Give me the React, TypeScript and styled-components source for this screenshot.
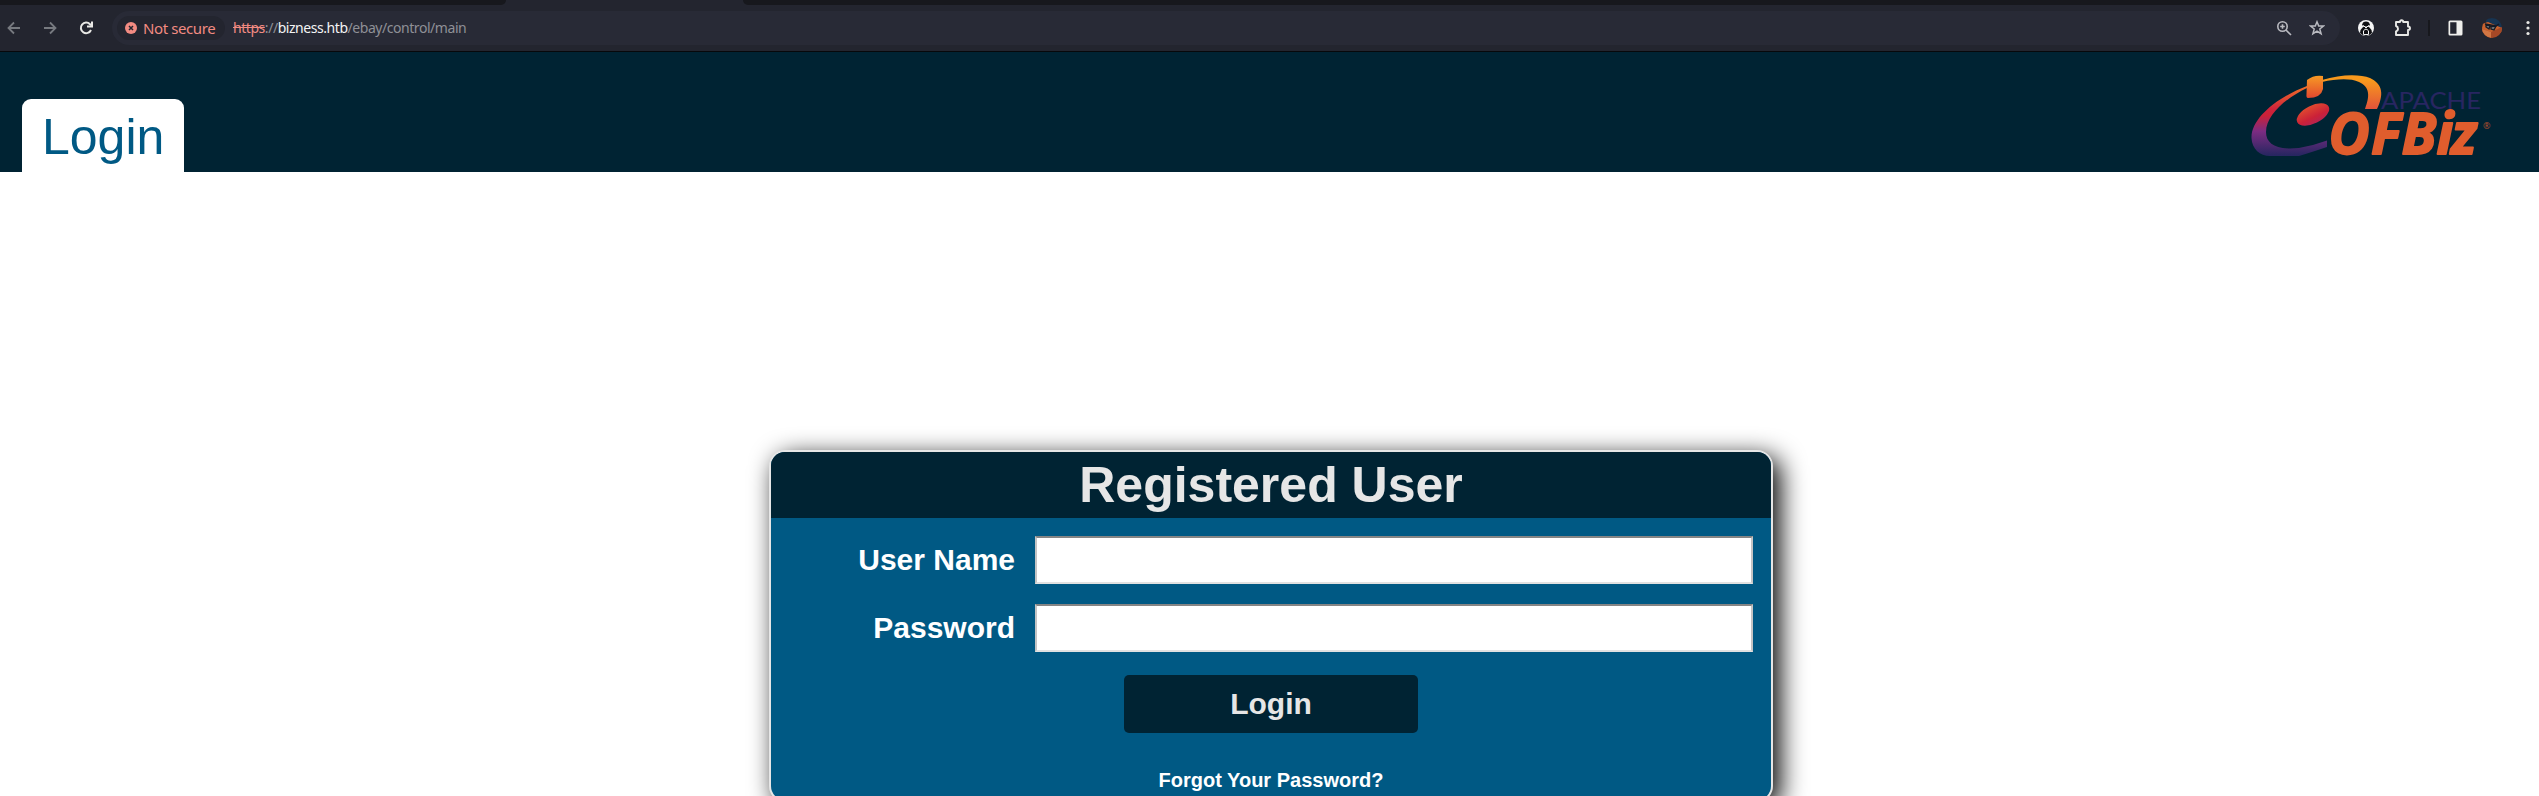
import React from 'react';
import styled, { createGlobalStyle } from 'styled-components';

const Global = createGlobalStyle`
  * { box-sizing: border-box; }
  html, body { margin: 0; background: #fff; }
  body { height: 796px; overflow: hidden; font-family: "Liberation Sans", Arial, sans-serif; }
`;

const Page = styled.div`
  width: 2539px;
  height: 796px;
  overflow: hidden;
  display: flex;
  flex-direction: column;
`;

const TabStrip = styled.div`
  height: 5px;
  flex: none;
  display: flex;
  background: #23252f;
`;

const StripSegment = styled.div<{ $width?: number; $side: 'left' | 'right' }>`
  width: ${(p) => (p.$width ? `${p.$width}px` : 'auto')};
  flex: ${(p) => (p.$width ? 'none' : '1')};
  margin-left: ${(p) => (p.$side === 'right' ? '237px' : '0')};
  background: #17181d;
  border-radius: ${(p) => (p.$side === 'left' ? '0 0 9px 0' : '0 0 0 9px')};
`;

const Toolbar = styled.div`
  height: 47px;
  flex: none;
  display: flex;
  align-items: center;
  background: #23252f;
  border-bottom: 1px solid #07080b;
  padding: 0 0 0 4px;
`;

const NavButtons = styled.div`
  display: flex;
  gap: 15px;
  width: 108px;
  flex: none;
  svg { display: block; }
`;

const AddressBar = styled.div`
  flex: none;
  width: 2228px;
  height: 34px;
  border-radius: 17px;
  background: #282a36;
  display: flex;
  align-items: center;
  padding: 0 15px 0 5px;
`;

const SecurityChip = styled.div`
  display: flex;
  align-items: center;
  flex: none;
  width: 108px;
  height: 24px;
  border-radius: 12px;
  background: #23252f;
  padding-left: 8px;
  gap: 6px;
  color: #f28b82;
  font: 15px/20px "Noto Sans", sans-serif;
  letter-spacing: -0.4px;
  white-space: nowrap;
`;

const Url = styled.div`
  flex: 1;
  margin-left: 8px;
  color: #8f9096;
  font: 14px/20px "Noto Sans", sans-serif;
  letter-spacing: -0.45px;
  white-space: nowrap;
`;

const Scheme = styled.span`
  color: #f28b82;
  text-decoration: line-through;
`;

const Host = styled.span`
  color: #f4f4f4;
`;

const BarActions = styled.div`
  display: flex;
  gap: 17px;
  svg { display: block; }
`;

const Extensions = styled.div`
  display: flex;
  align-items: center;
  padding-left: 18px;
  svg { display: block; flex: none; }
`;

const ExtensionSlot = styled.div<{ $gap: number }>`
  margin-left: ${(p) => p.$gap}px;
`;

const Separator = styled.div`
  width: 2px;
  height: 16px;
  margin: 0 18px 0 16px;
  background: #17181d;
`;

const Header = styled.header`
  height: 120px;
  flex: none;
  display: flex;
  justify-content: space-between;
  align-items: flex-end;
  background: #002333;
  padding: 0 34px 0 22px;
`;

const AppTab = styled.div`
  width: 162px;
  height: 73px;
  border-radius: 9px 9px 0 0;
  background: #fff;
  color: #005984;
  font-size: 50px;
  line-height: 56px;
  padding: 10px 20px 0;
`;

const Logo = styled.svg`
  width: 260px;
  height: 104px;
  display: block;
  overflow: visible;
`;

const Content = styled.main`
  flex: 1;
  padding: 278px 0 0 769px;
`;

const Card = styled.section`
  width: 1004px;
  height: 352px;
  border: 2px solid #e6e6e6;
  border-radius: 16px;
  background: #005984;
  box-shadow: 7px 7px 26px #000;
  overflow: hidden;
`;

const CardTitle = styled.h1`
  margin: 0;
  height: 66px;
  background: #002333;
  color: #e6e6e6;
  text-align: center;
  font-size: 50px;
  line-height: 66px;
`;

const Form = styled.form`
  display: flex;
  flex-direction: column;
  align-items: center;
  padding-top: 18px;
`;

const Field = styled.label`
  display: flex;
  align-items: center;
  width: 100%;
  height: 48px;
  margin-bottom: 20px;
  color: #fff;
  font-size: 30px;
  font-weight: bold;
`;

const FieldName = styled.span`
  width: 244px;
  margin-right: 20px;
  text-align: right;
`;

const Input = styled.input`
  width: 718px;
  height: 48px;
  padding: 0 4px;
  background: #fff;
  border: 2px solid;
  border-color: #858585 #c4c4c4 #e1e1e1 #c4c4c4;
  border-radius: 0;
  outline: none;
  font: 30px "Liberation Sans", sans-serif;
`;

const Submit = styled.button`
  width: 294px;
  height: 58px;
  margin-top: 3px;
  padding: 0;
  border: 0;
  border-radius: 5px;
  background: #002333;
  color: #e6e6e6;
  font: bold 30px/58px "Liberation Sans", sans-serif;
`;

const Forgot = styled.a`
  margin-top: 36px;
  color: #fff;
  font-size: 20px;
  line-height: 23px;
  font-weight: bold;
`;

const LogoDrawing = () => (
  <Logo viewBox="2245 68 260 104">
    <defs>
      <linearGradient id="ring" gradientUnits="userSpaceOnUse" x1="0" y1="76" x2="0" y2="155">
        <stop offset="0" stopColor="#f79a24" />
        <stop offset=".15" stopColor="#ee6a2a" />
        <stop offset=".42" stopColor="#cf233b" />
        <stop offset=".5" stopColor="#cb2138" />
        <stop offset=".7" stopColor="#7c2c82" />
        <stop offset="1" stopColor="#282661" />
      </linearGradient>
      <linearGradient id="arc" gradientUnits="userSpaceOnUse" x1="0" y1="80" x2="0" y2="109">
        <stop offset="0" stopColor="#f8991d" />
        <stop offset="1" stopColor="#e2533a" />
      </linearGradient>
      <linearGradient id="cube" x1="0" y1="0" x2="0" y2="1">
        <stop offset="0" stopColor="#f79a24" />
        <stop offset="1" stopColor="#e2482f" />
      </linearGradient>
      <linearGradient id="core" x1="0" y1="0" x2="0" y2="1">
        <stop offset="0" stopColor="#e0492f" />
        <stop offset=".65" stopColor="#cb2138" />
        <stop offset="1" stopColor="#b62350" />
      </linearGradient>
    </defs>
    <path fill="url(#ring)" d="M2307 86C2278 97 2251 118 2251.500 138C2252 149 2260 156 2270 156H2299C2309 153 2318 150 2327 147V140.500C2314 145 2300 149 2288 148.500C2273 147.500 2266 142 2266 132C2266 115 2286 98 2307 88Z" />
    <path fill="url(#arc)" d="M2322 80C2341 74 2360 74 2370 78C2383 84 2384 95 2377 109H2365C2370 96 2370 87 2359 82C2350 78 2336 79 2322 82Z" />
    <path fill="url(#cube)" d="M2307 80Q2314 74.500 2323 76V89Q2321 98 2308 98Q2306 98 2306.500 94Z" />
    <ellipse fill="url(#core)" cx="2313" cy="114.500" rx="17.500" ry="9" transform="rotate(-26 2313 114.500)" />
    <text x="2381" y="108.500" fontFamily="Lato, sans-serif" fontSize="23.500" textLength="100" lengthAdjust="spacingAndGlyphs" fill="#282661">APACHE</text>
    <text x="2328.500 2371 2401.500 2436.500 2451" y="153.500" fontFamily="Open Sans, sans-serif" fontWeight="700" fontStyle="italic" fontSize="56.500" fill="#e05d2d" stroke="#e05d2d" strokeWidth="1.800" strokeLinejoin="round">OFBiz</text>
    <text x="2483" y="129" fontFamily="Open Sans, sans-serif" fontSize="9" fill="#b9512f">®</text>
  </Logo>
);

export default function App() {
  return (
    <Page>
      <Global />
      <TabStrip>
        <StripSegment $width={506} $side="left" />
        <StripSegment $side="right" />
      </TabStrip>
      <Toolbar>
        <NavButtons>
          <svg width="21" height="20" viewBox="0 0 21 20" fill="none" stroke="#777a80" strokeWidth="1.8"><path d="M16 10H5M10 4.500L4.500 10L10 15.500" /></svg>
          <svg width="21" height="20" viewBox="0 0 21 20" fill="none" stroke="#777a80" strokeWidth="1.8"><path d="M4 10H15M10 4.500L15.500 10L10 15.500" /></svg>
          <svg width="21" height="20" viewBox="0 0 21 20" fill="none" stroke="#e9e9e6" strokeWidth="2"><path d="M15 12A5.300 5.300 0 1 1 14 6.200L15 7.500" /><path d="M16 3.500V8.500H11" /></svg>
        </NavButtons>
        <AddressBar>
          <SecurityChip>
            <svg width="12" height="12" viewBox="0 0 12 12"><circle cx="6" cy="6" r="6" fill="#f28b82" /><path d="M4 4L8 8M8 4L4 8" stroke="#23252f" strokeWidth="1.500" /></svg>
            Not secure
          </SecurityChip>
          <Url><Scheme>https</Scheme>://<Host>bizness.htb</Host>/ebay/control/main</Url>
          <BarActions>
            <svg width="16" height="16" viewBox="0 0 16 16" fill="none" stroke="#b9bac0" strokeWidth="1.600"><circle cx="6.500" cy="6.500" r="4.700" /><path d="M10 10L15 15M4.200 6.500H8.800M6.500 4.200V8.800" /></svg>
            <svg width="16" height="16" viewBox="0 0 16 16" fill="none" stroke="#b9bac0" strokeWidth="1.500"><path d="M8 1.800L9.700 6H14.500L10.800 9L12.100 13.700L8 11.100L3.900 13.700L5.200 9L1.500 6H6.300Z" /></svg>
          </BarActions>
        </AddressBar>
        <Extensions>
          <svg width="16" height="16" viewBox="0 0 16 16">
            <circle cx="8" cy="8" r="8" fill="#f5f5f5" />
            <path d="M5 2.500Q8 .500 11 2.500L12 5L10 6.500H6L4 5Z" fill="#101114" />
            <path d="M5 7H11L13.500 10L14 13Q11 16 8 16Q5 16 2 13L2.500 10Z" fill="#101114" />
            <path d="M5.500 10.500L8 9L10.500 10.500M5.500 11V14.500H10.500V11M3 8L5.500 5.500L8 8L10.500 5.500L13 8" fill="none" stroke="#f5f5f5" strokeWidth="1" />
          </svg>
          <ExtensionSlot $gap={19}>
            <svg width="19" height="18" viewBox="0 0 19 18" fill="none" stroke="#e9e9e6" strokeWidth="1.900" strokeLinejoin="round">
              <path d="M3 3H7Q7 1.200 8.600 1.200T10.200 3H15V7.500Q17 7.500 17 9.200T15 11V16H3V12.300Q5 11.800 5 9.700T3 7Z" />
            </svg>
          </ExtensionSlot>
          <Separator />
          <svg width="15" height="16" viewBox="0 0 15 16"><path d="M2 .500H13Q14.500 .500 14.500 2V14Q14.500 15.500 13 15.500H2Q.500 15.500 .500 14V2Q.500 .500 2 .500ZM2.200 2.200V13.800H8.500V2.200Z" fill="#efefec" fillRule="evenodd" /></svg>
          <ExtensionSlot $gap={19}>
            <svg width="20" height="20" viewBox="0 0 20 20">
              <defs><clipPath id="avatar"><circle cx="10" cy="10" r="10" /></clipPath></defs>
              <g clipPath="url(#avatar)">
                <path d="M4 0H20V12L4 8Z" fill="#173451" />
                <path d="M0 6L6 4L20 10V14L9 20L0 13Z" fill="#c9622e" />
                <path d="M0 11L9 14L20 9V20H0Z" fill="#a64826" />
                <path d="M0 11L9 14V20H0Z" fill="#d17643" />
                <path d="M4 7L8 7.500L7 11L4 9ZM9 8.500L14 8L12 12L9 11Z" fill="#6d7175" stroke="#171b25" strokeWidth="1.300" />
                <path d="M3 6L14 8L17 6" fill="none" stroke="#171b25" strokeWidth="1.500" />
              </g>
            </svg>
          </ExtensionSlot>
          <ExtensionSlot $gap={24}>
            <svg width="4" height="16" viewBox="0 0 4 16" fill="#e9e9e6"><circle cx="2" cy="2.500" r="1.600" /><circle cx="2" cy="8" r="1.600" /><circle cx="2" cy="13.500" r="1.600" /></svg>
          </ExtensionSlot>
        </Extensions>
      </Toolbar>
      <Header>
        <AppTab>Login</AppTab>
        <LogoDrawing />
      </Header>
      <Content>
        <Card>
          <CardTitle>Registered User</CardTitle>
          <Form>
            <Field><FieldName>User Name</FieldName><Input /></Field>
            <Field><FieldName>Password</FieldName><Input type="password" /></Field>
            <Submit type="button">Login</Submit>
            <Forgot>Forgot Your Password?</Forgot>
          </Form>
        </Card>
      </Content>
    </Page>
  );
}
